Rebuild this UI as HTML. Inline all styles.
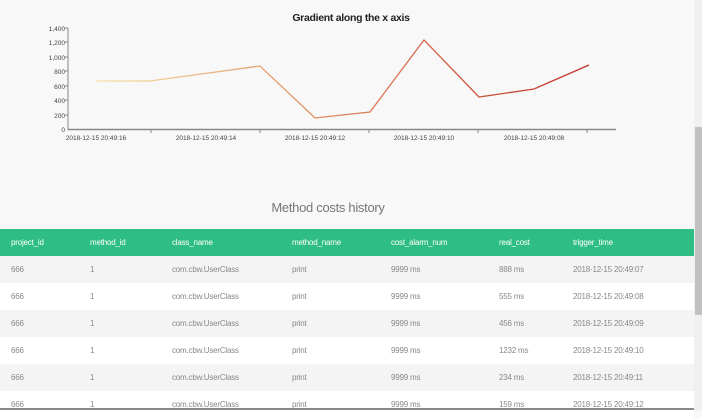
<!DOCTYPE html>
<html><head><style>
body{margin:0;width:702px;height:410px;overflow:hidden;background:#f8f8f8;font-family:"Liberation Sans",sans-serif;position:relative}
.sb{position:absolute;right:0;top:0;width:8px;height:410px;background:#f0f0f0}
.th{position:absolute;right:0;top:127px;width:7px;height:188px;background:#c1c1c1}
h2{position:absolute;top:200px;left:0;width:656px;text-align:center;margin:0;font-weight:normal;font-size:13px;color:#777;letter-spacing:-0.3px}
table{position:absolute;top:229px;left:0;width:694px;border-collapse:collapse;font-size:8px;letter-spacing:-0.2px;table-layout:fixed}
th{background:#2fbd86;color:#fff;text-align:left;font-weight:normal;height:27px;padding:0 0 0 11px}
td{height:27px;padding:0 0 0 11px;color:#888}
tr:nth-child(even) td{background:#f4f4f4}
tr:nth-child(odd) td{background:#fff}
</style></head><body>
<svg width="694" height="160" style="position:absolute;left:0;top:0" font-family="Liberation Sans" >
<defs><linearGradient id="g" x1="96" x2="589" y1="0" y2="0" gradientUnits="userSpaceOnUse"><stop offset="0" stop-color="#f5e2a8"/><stop offset="0.45" stop-color="#e08c5e"/><stop offset="1" stop-color="#c0302a"/></linearGradient></defs>
<text x="351" y="21" text-anchor="middle" font-size="10.5" font-weight="bold" fill="#222" letter-spacing="-0.3">Gradient along the x axis</text>
<g font-size="6.5" fill="#444" text-anchor="end">
<text x="65" y="31">1,400</text><text x="65" y="45">1,200</text><text x="65" y="60">1,000</text><text x="65" y="74">800</text><text x="65" y="89">600</text><text x="65" y="103">400</text><text x="65" y="118">200</text><text x="65" y="132">0</text></g>
<g stroke="#888" stroke-width="1">
<line x1="68" y1="28" x2="68" y2="130"/><line x1="68" y1="129.5" x2="616" y2="129.5" stroke-width="1.5"/>
<line x1="64" y1="28" x2="68" y2="28"/><line x1="64" y1="42" x2="68" y2="42"/><line x1="64" y1="57" x2="68" y2="57"/><line x1="64" y1="71" x2="68" y2="71"/><line x1="64" y1="86" x2="68" y2="86"/><line x1="64" y1="100" x2="68" y2="100"/><line x1="64" y1="115" x2="68" y2="115"/>
<line x1="151" y1="130" x2="151" y2="133"/><line x1="260" y1="130" x2="260" y2="133"/><line x1="369" y1="130" x2="369" y2="133"/><line x1="478" y1="130" x2="478" y2="133"/><line x1="587" y1="130" x2="587" y2="133"/></g>
<g font-size="6.5" fill="#444" text-anchor="middle"><text x="96" y="140">2018-12-15 20:49:16</text><text x="206" y="140">2018-12-15 20:49:14</text><text x="315" y="140">2018-12-15 20:49:12</text><text x="424" y="140">2018-12-15 20:49:10</text><text x="534" y="140">2018-12-15 20:49:08</text></g>
<polyline fill="none" stroke="url(#g)" stroke-width="1.3" points="96,81 150,81 260,66 315,118 370,112 424,40 479,97 534,89 589,65"/>
</svg>
<h2>Method costs history</h2>
<table>
<colgroup><col style="width:79px"><col style="width:82px"><col style="width:120px"><col style="width:99px"><col style="width:108px"><col style="width:74px"><col></colgroup>
<tr><th>project_id</th><th>method_id</th><th>class_name</th><th>method_name</th><th>cost_alarm_num</th><th>real_cost</th><th>trigger_time</th></tr>
<tr><td>666</td><td>1</td><td>com.cbw.UserClass</td><td>print</td><td>9999 ms</td><td>888 ms</td><td>2018-12-15 20:49:07</td></tr>
<tr><td>666</td><td>1</td><td>com.cbw.UserClass</td><td>print</td><td>9999 ms</td><td>555 ms</td><td>2018-12-15 20:49:08</td></tr>
<tr><td>666</td><td>1</td><td>com.cbw.UserClass</td><td>print</td><td>9999 ms</td><td>456 ms</td><td>2018-12-15 20:49:09</td></tr>
<tr><td>666</td><td>1</td><td>com.cbw.UserClass</td><td>print</td><td>9999 ms</td><td>1232 ms</td><td>2018-12-15 20:49:10</td></tr>
<tr><td>666</td><td>1</td><td>com.cbw.UserClass</td><td>print</td><td>9999 ms</td><td>234 ms</td><td>2018-12-15 20:49:11</td></tr>
<tr><td>666</td><td>1</td><td>com.cbw.UserClass</td><td>print</td><td>9999 ms</td><td>159 ms</td><td>2018-12-15 20:49:12</td></tr>
</table>
<div class="sb"><div class="th"></div></div>
<div style="position:absolute;left:0;top:408px;width:694px;height:2px;background:#888"></div>
</body></html>
